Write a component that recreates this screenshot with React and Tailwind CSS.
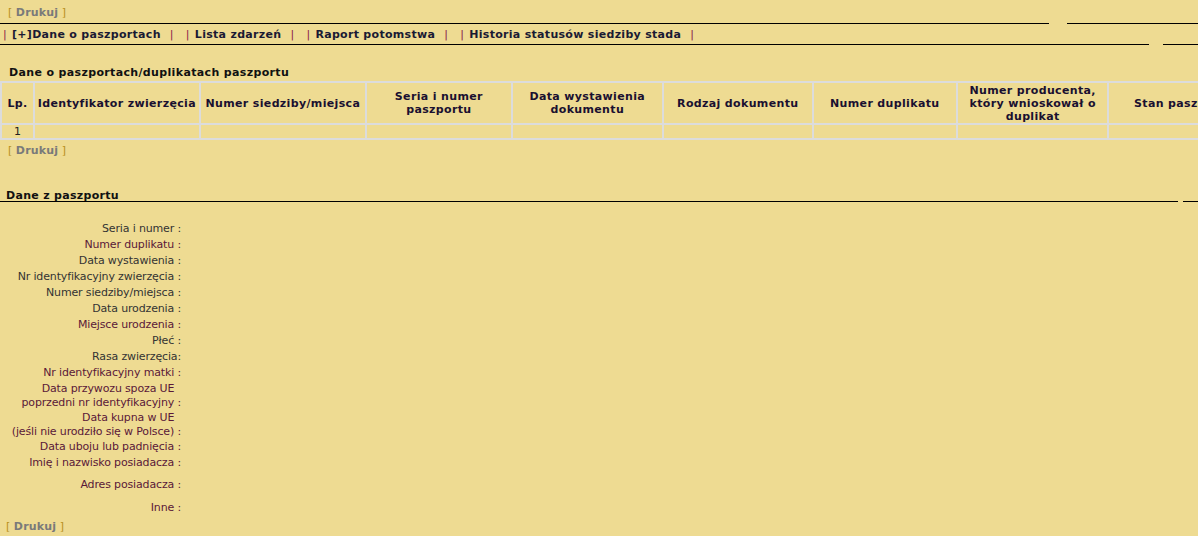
const Drukuj = () => (
  <span className="whitespace-nowrap">
    <span className="text-[#b8901c]">[ </span>
    <span className="font-bold tracking-[0.2px] text-[#7a7a7a]">Drukuj</span>
    <span className="text-[#b8901c]"> ]</span>
  </span>
);

const navItems = [
  "[+]Dane o paszportach",
  "Lista zdarzeń",
  "Raport potomstwa",
  "Historia statusów siedziby stada",
];

const columns = [
  { label: "Lp.", w: "w-[33px]" },
  { label: "Identyfikator zwierzęcia", w: "w-[165px]" },
  { label: "Numer siedziby/miejsca", w: "w-[166px]" },
  { label: "Seria i numer paszportu", w: "w-[145px]" },
  { label: "Data wystawienia dokumentu", w: "w-[151px]" },
  { label: "Rodzaj dokumentu", w: "w-[149px]" },
  { label: "Numer duplikatu", w: "w-[144px]" },
  { label: "Numer producenta, który wnioskował o duplikat", w: "w-[151px]" },
  { label: "Stan paszportu", w: "w-[150px]" },
];

const fields = [
  { lines: ["Seria i numer :"], dark: true },
  { lines: ["Numer duplikatu :"] },
  { lines: ["Data wystawienia :"], dark: true },
  { lines: ["Nr identyfikacyjny zwierzęcia :"], dark: true },
  { lines: ["Numer siedziby/miejsca :"], dark: true },
  { lines: ["Data urodzenia :"], dark: true },
  { lines: ["Miejsce urodzenia :"] },
  { lines: ["Płeć :"], dark: true },
  { lines: ["Rasa zwierzęcia:"], dark: true },
  { lines: ["Nr identyfikacyjny matki :"] },
  { lines: ["Data przywozu spoza UE\u00a0\u00a0", "poprzedni nr identyfikacyjny :"] },
  { lines: ["Data kupna w UE\u00a0\u00a0", "(jeśli nie urodziło się w Polsce) :"] },
  { lines: ["Data uboju lub padnięcia :"] },
  { lines: ["Imię i nazwisko posiadacza :"], h: "h-[22px]" },
  { lines: ["Adres posiadacza :"], h: "h-[23px]" },
  { lines: ["Inne :"] },
];

export default function App() {
  return (
    <div className="min-h-screen w-full overflow-hidden bg-[#eedb92] font-['DejaVu_Sans',Verdana,sans-serif] text-[11px] leading-[13px] text-[#222]">
      <div className="flex h-[23px] items-end pb-[4px] pl-[8px]">
        <Drukuj />
      </div>

      <div className="flex">
        <div className="w-[1049px] border-t border-black" />
        <div className="w-[18px]" />
        <div className="flex-1 border-t border-black" />
      </div>

      <div className="flex h-[20px] items-center pl-[3px] font-bold tracking-[0.3px] text-[#1a1a33]">
        {navItems.map((item) => (
          <div key={item} className="mr-[12px] flex items-center whitespace-nowrap">
            <span className="font-normal text-[#8a1a4a]">|</span>
            <span className="ml-[5px]">{item}</span>
            <span className="ml-[9px] font-normal text-[#8a1a4a]">|</span>
          </div>
        ))}
      </div>

      <div className="flex">
        <div className="w-[1149px] border-t border-black" />
        <div className="w-[14px]" />
        <div className="flex-1 border-t border-black" />
      </div>

      <div className="mt-[21px] pl-[9px] font-bold tracking-[0.35px] text-[#111]">
        Dane o paszportach/duplikatach paszportu
      </div>

      <div className="mt-[2px] w-full overflow-hidden">
        <table className="w-[1260px] table-fixed border-collapse">
          <thead>
            <tr className="h-[42px]">
              {columns.map((c) => (
                <th
                  key={c.label}
                  className={`${c.w} border-2 border-[#dcdcdc] px-[1px] text-center align-middle text-[11px] font-bold leading-[13px] tracking-[0.35px] text-[#1a1030]`}
                >
                  {c.label}
                </th>
              ))}
            </tr>
          </thead>
          <tbody>
            <tr className="h-[15px]">
              {columns.map((c, i) => (
                <td
                  key={c.label}
                  className="border-2 border-t-0 border-[#dcdcdc] text-center leading-[12px] text-[#222]"
                >
                  {i === 0 ? "1" : ""}
                </td>
              ))}
            </tr>
          </tbody>
        </table>
      </div>

      <div className="mt-[4px] pl-[8px]">
        <Drukuj />
      </div>

      <div className="mt-[33px] flex items-end">
        <div className="w-[1178px] border-b border-black pl-[6px] font-bold leading-[11px] tracking-[0.3px] text-[#111]">
          Dane z paszportu
        </div>
        <div className="w-[5px]" />
        <div className="flex-1 border-b border-black" />
      </div>

      <div className="mt-[20px] flex flex-col">
        {fields.map((f) => (
          <div
            key={f.lines.join()}
            className={`flex ${f.h || (f.lines.length > 1 ? "h-[29px]" : "h-[16px]")} items-start`}
          >
            <div className="flex w-[181px] shrink-0 flex-col items-end">
              {f.lines.map((l) => (
                <span
                  key={l}
                  className={`whitespace-nowrap leading-[14px] tracking-[-0.15px] ${f.dark ? "text-[#333]" : "text-[#5a1838]"}`}
                >
                  {l}
                </span>
              ))}
            </div>
          </div>
        ))}
      </div>

      <div className="mt-[3px] pl-[6px]">
        <Drukuj />
      </div>
    </div>
  );
}
